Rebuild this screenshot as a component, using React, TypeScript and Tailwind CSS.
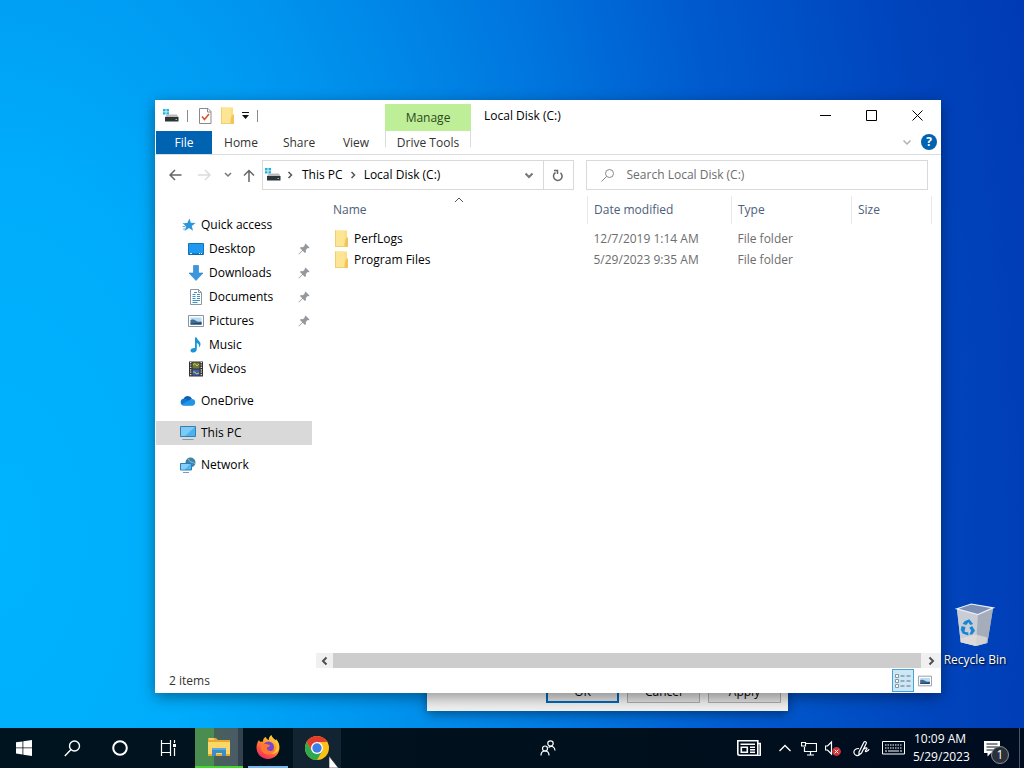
import React, { useState } from 'react';

type IconProps = { className?: string };

const DriveIcon: React.FC<IconProps> = ({ className }) => (
  <svg className={className} width="16" height="16" viewBox="0 0 16 16">
    <path d="M0 1h2.600v2.400H0zM3.400 1H6v2.400H3.400zM0 4.200h2.600v2.400H0zM3.400 4.200H6v2.400H3.400z" fill="#1fb5d8" />
    <path d="M3.500 6.500h10.500l1.500 3H2z" fill="#b9bdc1" />
    <path d="M2 9h13.500v4.500H2z" fill="#2f3438" />
    <path d="M12.500 11h1.500v1h-1.500z" fill="#5fe08a" />
  </svg>
);

const FolderIcon: React.FC<IconProps> = ({ className }) => (
  <svg className={className} width="16" height="18" viewBox="0 0 16 18">
    <path d="M2 .500h12v15.500H2z" fill="#fbdf83" />
    <path d="M2 .500h9.500v15.500H2z" fill="#fce595" />
    <path d="M12.500 9l2.500-2v10h-4z" fill="#f1c55a" />
    <path d="M2 .500h1v15.500H2zM2 16h11v1H2z" fill="#f2cf6c" />
  </svg>
);

const PropertiesIcon = () => (
  <svg width="14" height="16" viewBox="0 0 14 16">
    <path d="M1.500.500h8.500l3 3v12H1.500z" fill="#fff" stroke="#8a8a8a" />
    <path d="M9.500.500v3.500H13" fill="none" stroke="#8a8a8a" />
    <path d="M4 8.500l2.500 3L11 6" fill="none" stroke="#d9532c" strokeWidth="1.600" />
  </svg>
);

const Chevron: React.FC<IconProps & { d: string; w?: number }> = ({ className, d, w = 1.5 }) => (
  <svg className={className} width="10" height="10" viewBox="0 0 10 10" fill="none" stroke="currentColor" strokeWidth={w}>
    <path d={d} />
  </svg>
);

const DOWN = 'M1.500 3.500L5 7l3.500-3.500';
const UP = 'M1 7l4-4 4 4';
const RIGHT = 'M3.500 2l3 3-3 3';
const LEFT = 'M6.500 1.500L3 5l3.500 3.500';

const StarIcon = () => (
  <svg width="16" height="16" viewBox="0 0 16 16">
    <path d="M9.500 1.500l1.300 4.200 4.700.3-3.700 3 1.200 4.800L9 11l-4.500 3 1.700-4.600L2.500 6l4.800-.1z" fill="#2b95dd" />
    <path d="M2.500 9.500h3M3 12h2.500M3 6.500h2" stroke="#63b3e8" />
  </svg>
);

const DesktopIcon = () => (
  <svg width="16" height="16" viewBox="0 0 16 16">
    <path d="M.500 2.500h15v11H.500z" fill="#1e9bf0" stroke="#1273b8" />
    <path d="M1 13h14" stroke="#0b5f9e" />
    <path d="M2 12.500h2M11 12.500h1M13 12.500h1" stroke="#d7efff" />
  </svg>
);

const DownloadIcon = () => (
  <svg width="16" height="16" viewBox="0 0 16 16">
    <path d="M5.500.500h5V8H15l-7 7.500L1 8h4.500z" fill="#3a96dd" stroke="#2f80c4" strokeWidth=".6" />
  </svg>
);

const DocumentIcon = () => (
  <svg width="16" height="16" viewBox="0 0 16 16">
    <path d="M2.500.500h8l3 3v12h-11z" fill="#fff" stroke="#8c969c" />
    <path d="M10.500.500v3h3" fill="none" stroke="#8c969c" />
    <path d="M6 3.500h3M4.500 5.500h3M9 5.500h3M4.500 7.500h3M9 7.500h3M4.500 9.500h3M9 9.500h3M4.500 11.500h7.500M4.500 13.500h5" stroke="#3c94c4" />
  </svg>
);

const PictureIcon: React.FC<IconProps> = ({ className }) => (
  <svg className={className} width="16" height="16" viewBox="0 0 16 16">
    <path d="M.500 2.500h15v11H.500z" fill="#fff" stroke="#8a949c" />
    <path d="M2.500 4.500h11v7h-11z" fill="#b5daf2" />
    <path d="M2.500 7c2-1 3.500-.5 5.500.8s3.500 1 5.500.7v3h-11z" fill="#3f6c93" />
    <path d="M2.500 10.500l11-1v2h-11z" fill="#27476b" />
  </svg>
);

const MusicIcon = () => (
  <svg width="16" height="16" viewBox="0 0 16 16">
    <path d="M7 .500h1.800c.4 3 3.700 3.500 3.700 6.500 0 1.500-.6 2.700-1.500 3.500.5-2.600-.6-4-2.200-4.500V12c0 2-1.500 3.500-3.600 3.500-1.500 0-2.700-.8-2.700-2.100 0-1.600 1.800-2.700 4.500-2.500z" fill="#1a96d8" />
  </svg>
);

const VideoIcon = () => (
  <svg width="16" height="16" viewBox="0 0 16 16">
    <path d="M1 .500h14v15H1z" fill="#33312f" />
    <path d="M4.500 1.500h7v6h-7z" fill="#6d7a3c" />
    <path d="M4.500 8.500h7v6h-7z" fill="#3d5fb0" />
    <path d="M5 4l2-1.500L9 5l2-2M5 11h2l1.500 2 2.500-1" stroke="#d9c554" fill="none" />
    <path d="M2.700 1v14M13.300 1v14" stroke="#e8e8e8" strokeWidth="1.300" strokeDasharray="1.200 1.200" />
  </svg>
);

const CloudIcon = () => (
  <svg width="16" height="16" viewBox="0 0 16 16">
    <path d="M3.500 6A4.600 4.600 0 0 1 12 5.800L9 9z" fill="#0f5fb3" />
    <path d="M3.600 5.800c1.700-.3 3 .3 4.200 1.100L13 12.500H3.400A3.400 3.400 0 0 1 3.600 5.800z" fill="#1277cf" />
    <path d="M12 5.900a3.400 3.400 0 0 1 .6 6.700H3.200c-.8 0-1.500-.3-2-.8L9.500 7c.8-.7 1.600-1 2.500-1.100z" fill="#2296e6" />
  </svg>
);

const ComputerIcon = () => (
  <svg width="16" height="16" viewBox="0 0 16 16">
    <path d="M.500 1.500h15v10H.500z" fill="#49b3f0" stroke="#3b7ea6" />
    <path d="M1 2h14L5 11H1z" fill="#7ccbf6" />
    <path d="M2.500 14.500h11" stroke="#7b9bb0" />
  </svg>
);

const NetworkIcon = () => (
  <svg width="16" height="16" viewBox="0 0 16 16">
    <circle cx="10.500" cy="5.500" r="5" fill="#3f82ab" />
    <path d="M8 2c2 1 1 3 3 3s3 2 4 1" stroke="#8cc3c4" fill="none" />
    <path d="M.500 6.500h11v6.500H.500z" fill="#4fb7f1" stroke="#2e7fb5" />
    <path d="M1 7h9l-5 5.500H1z" fill="#83cff7" />
    <path d="M3 15.500h6" stroke="#6c9fc0" />
  </svg>
);

const PinIcon = () => (
  <svg width="12" height="12" viewBox="0 0 12 12">
    <path d="M7.500.500l4 4-1 .8-.8-.2-1.900 2 .2 2-1 1L4.600 7.700 1 11.500l-.5-.5 3.700-3.700L1.900 5l1-1 2 .2 2-1.900-.2-.8z" fill="#93999e" />
  </svg>
);

const quickAccess = [
  { label: 'Desktop', icon: <DesktopIcon />, pinned: true },
  { label: 'Downloads', icon: <DownloadIcon />, pinned: true },
  { label: 'Documents', icon: <DocumentIcon />, pinned: true },
  { label: 'Pictures', icon: <PictureIcon />, pinned: true },
  { label: 'Music', icon: <MusicIcon />, pinned: false },
  { label: 'Videos', icon: <VideoIcon />, pinned: false },
];

const places = [
  { label: 'OneDrive', icon: <CloudIcon /> },
  { label: 'This PC', icon: <ComputerIcon /> },
  { label: 'Network', icon: <NetworkIcon /> },
];

const files = [
  { name: 'PerfLogs', modified: '12/7/2019 1:14 AM', type: 'File folder', size: '' },
  { name: 'Program Files', modified: '5/29/2023 9:35 AM', type: 'File folder', size: '' },
];

const RibbonHeader = () => (
  <header className="flex h-[55px] shrink-0 border-b border-[#dadbdc]">
    <div className="flex w-[230px] flex-col">
      <div className="flex h-[31px] items-center pl-2">
        <DriveIcon />
        <span className="ml-2 h-3 w-px bg-[#8a8a8a]" />
        <button aria-label="Properties" className="ml-2.5"><PropertiesIcon /></button>
        <button aria-label="New folder" className="ml-[7px]"><FolderIcon /></button>
        <button aria-label="Customize Quick Access Toolbar" className="ml-1.5">
          <svg width="9" height="9" viewBox="0 0 9 9">
            <path d="M1 1.500h7" stroke="#111" />
            <path d="M1 4h7L4.500 8z" fill="#111" />
          </svg>
        </button>
        <span className="ml-[7px] h-3 w-px bg-[#8a8a8a]" />
      </div>
      <nav className="flex h-[23px] text-[#333]">
        <button className="ml-px w-14 bg-[#0063b1] text-white">File</button>
        <button className="w-[58px]">Home</button>
        <button className="w-[58px]">Share</button>
        <button className="w-14">View</button>
      </nav>
    </div>
    <div className="flex w-[86px] flex-col pt-1 text-[#333]">
      <div className="flex h-[27px] items-center justify-center bg-[#beee98] text-[#2c4a1c]">Manage</div>
      <button className="h-4 border-x border-[#dadbdc] pt-1 leading-4">Drive Tools</button>
    </div>
    <div className="flex min-w-0 flex-1 flex-col">
      <div className="flex h-[31px] items-center pr-px">
        <h1 className="flex-1 pl-[13px] text-black">Local Disk (C:)</h1>
        <button aria-label="Minimize" className="flex h-full w-[46px] items-center justify-center">
          <svg width="11" height="11" viewBox="0 0 11 11" stroke="#000"><path d="M0 5.500h11" /></svg>
        </button>
        <button aria-label="Maximize" className="flex h-full w-[46px] items-center justify-center">
          <svg width="11" height="11" viewBox="0 0 11 11" stroke="#000" fill="none"><path d="M.500.500h10v10H.500z" /></svg>
        </button>
        <button aria-label="Close" className="flex h-full w-[46px] items-center justify-center">
          <svg width="11" height="11" viewBox="0 0 11 11" stroke="#000"><path d="M.500.500l10 10M10.500.500l-10 10" /></svg>
        </button>
      </div>
      <div className="flex h-[22px] items-center justify-end gap-[9px] pr-1">
        <button aria-label="Expand the Ribbon"><Chevron d={DOWN} className="text-[#b0b0b0]" /></button>
        <button aria-label="Help" className="flex h-4 w-4 items-center justify-center rounded-full bg-[#0063b1] font-bold text-white">?</button>
      </div>
    </div>
  </header>
);

const NavigationBar = () => (
  <div className="flex h-[38px] shrink-0 items-center pt-0.5 pr-[13px] pl-3.5">
    <button aria-label="Back">
      <svg width="13" height="12" viewBox="0 0 13 12" fill="none" stroke="#666" strokeWidth="1.500"><path d="M12.500 6H1M6 1L1 6l5 5" /></svg>
    </button>
    <button aria-label="Forward" className="ml-4">
      <svg width="13" height="12" viewBox="0 0 13 12" fill="none" stroke="#dcdcdc" strokeWidth="1.500"><path d="M0 6h11.500M7 1l5 5-5 5" /></svg>
    </button>
    <button aria-label="Recent locations" className="ml-3">
      <Chevron d="M2 3l3 3 3-3" className="text-[#777]" />
    </button>
    <button aria-label="Up" className="ml-2.5">
      <svg width="12" height="13" viewBox="0 0 12 13" fill="none" stroke="#666" strokeWidth="1.500"><path d="M6 13V1.500M1 6.500l5-5 5 5" /></svg>
    </button>
    <div className="ml-[7px] flex h-[30px] min-w-0 flex-[10] items-center border border-[#d9d9d9]">
      <DriveIcon className="ml-0.5" />
      <Chevron d={RIGHT} className="ml-1 text-[#555]" />
      <button className="ml-[7px]">This PC</button>
      <Chevron d={RIGHT} className="ml-[5px] text-[#555]" />
      <button className="ml-1.5">Local Disk (C:)</button>
      <button aria-label="Previous locations" className="mr-[9px] ml-auto"><Chevron d={DOWN} w={2} className="text-[#777]" /></button>
      <button aria-label="Refresh" className="flex h-full w-[30px] items-center justify-center border-l border-[#d9d9d9]">
        <svg width="12" height="13" viewBox="0 0 12 13" fill="none" stroke="#666" strokeWidth="1.500">
          <path d="M8.500 3.800A4.300 4.300 0 1 1 3.500 3.500" />
          <path d="M2 1.500h3.500V5" />
        </svg>
      </button>
    </div>
    <label className="ml-3 flex h-[30px] min-w-0 flex-[11] items-center border border-[#d9d9d9]">
      <svg className="ml-3.5" width="14" height="14" viewBox="0 0 14 14" fill="none" stroke="#888"><circle cx="8.500" cy="5.500" r="4" /><path d="M5.500 8.500L.500 13.500" /></svg>
      <input
        type="text"
        aria-label="Search Local Disk (C:)"
        placeholder="Search Local Disk (C:)"
        className="ml-3 min-w-0 flex-1 outline-none placeholder:text-[#6d6d6d]"
      />
    </label>
  </div>
);

const Sidebar: React.FC<{ selected: string; onSelect: (label: string) => void }> = ({ selected, onSelect }) => (
  <nav className="flex w-[158px] shrink-0 flex-col px-px pt-5">
    <button className="flex h-6 items-center gap-[5px] pl-6">
      <StarIcon />
      Quick access
    </button>
    {quickAccess.map((item) => (
      <button key={item.label} className="flex h-6 items-center gap-[5px] pr-0.5 pl-8">
        {item.icon}
        <span className="flex-1 text-left">{item.label}</span>
        {item.pinned && <PinIcon />}
      </button>
    ))}
    {places.map((item) => (
      <button
        key={item.label}
        onClick={() => onSelect(item.label)}
        className={`mt-2 flex h-6 items-center gap-[5px] pl-6 ${selected === item.label ? 'bg-[#d9d9d9]' : ''}`}
      >
        {item.icon}
        {item.label}
      </button>
    ))}
  </nav>
);

const FileList = () => (
  <div className="flex min-w-0 flex-1 flex-col">
    <div className="flex-1 pt-[3px] pr-[9px] pl-2">
      <table className="w-full table-fixed border-collapse text-left">
        <colgroup>
          <col />
          <col className="w-36" />
          <col className="w-[120px]" />
          <col className="w-20" />
        </colgroup>
        <thead className="text-[#4c607a]">
          <tr className="h-7">
            <th className="relative border-r border-[#e8e8e8] pl-3 font-normal">
              Name
              <Chevron d={UP} w={1} className="absolute -top-px left-1/2 text-[#555]" />
            </th>
            <th className="border-r border-[#e8e8e8] pl-1.5 font-normal">Date modified</th>
            <th className="border-r border-[#e8e8e8] pl-1.5 font-normal">Type</th>
            <th className="border-r border-[#e8e8e8] pl-1.5 font-normal">Size</th>
          </tr>
        </thead>
        <tbody className="text-[#6d6d6d]">
          <tr className="h-1"><td colSpan={4} /></tr>
          {files.map((file) => (
            <tr key={file.name} className="h-[21px]">
              <td className="p-0 pl-3">
                <span className="flex items-center gap-[5px] text-black">
                  <FolderIcon />
                  {file.name}
                </span>
              </td>
              <td className="p-0 pl-1.5">{file.modified}</td>
              <td className="p-0 pl-1.5">{file.type}</td>
              <td className="p-0 pl-1.5">{file.size}</td>
            </tr>
          ))}
        </tbody>
      </table>
    </div>
    <div className="ml-[3px] flex h-[15px] items-center bg-[#f0f0f0]">
      <button aria-label="Scroll left" className="flex w-[17px] justify-center"><Chevron d={LEFT} w={2} className="text-[#505050]" /></button>
      <div className="h-full flex-1 bg-[#cdcdcd]" />
      <button aria-label="Scroll right" className="flex w-5 justify-center"><Chevron d="M3.500 1.500L7 5 3.500 8.500" w={2} className="text-[#505050]" /></button>
    </div>
  </div>
);

const ExplorerWindow = () => {
  const [selected, setSelected] = useState('This PC');

  return (
    <section className="absolute top-[100px] right-[83px] bottom-[35px] left-[155px] flex flex-col bg-white shadow-[0_4px_14px_rgba(0,0,0,0.4)]">
      <RibbonHeader />
      <NavigationBar />
      <div className="flex min-h-0 flex-1">
        <Sidebar selected={selected} onSelect={setSelected} />
        <FileList />
      </div>
      <footer className="flex h-[25px] shrink-0 items-center justify-between pr-[9px] pl-3.5 text-[#333]">
        2 items
        <div className="flex items-center gap-1">
          <button aria-label="Details view" className="flex h-[23px] w-[22px] items-center justify-center border border-[#4ba3d3] bg-[#cce8f6]">
            <svg width="16" height="14" viewBox="0 0 16 14" fill="none">
              <path d="M.500.500h3v3h-3zM.500 5.500h3v3h-3zM.500 10.500h3v3h-3z" fill="#fff" stroke="#8496a3" />
              <path d="M5.500 2h4M11.500 2h4M5.500 7h4M11.500 7h4M5.500 12h4M11.500 12h4" stroke="#60717e" />
            </svg>
          </button>
          <button aria-label="Large icons view"><PictureIcon className="h-3.5 w-3.5" /></button>
        </div>
      </footer>
    </section>
  );
};

const PropertiesDialog = () => (
  <section className="absolute bottom-[17px] left-[427px] flex h-[300px] w-[361px] items-end justify-end gap-2 bg-[#f0f0f0] px-[7px] pb-2 shadow-[0_3px_10px_rgba(0,0,0,0.4)]">
    <button className="h-[23px] w-[73px] border-2 border-[#0067b8] bg-[#e1e1e1]">OK</button>
    <button className="h-[23px] w-[73px] border border-[#adadad] bg-[#e1e1e1]">Cancel</button>
    <button className="h-[23px] w-[73px] border border-[#adadad] bg-[#e1e1e1]">Apply</button>
  </section>
);

const RecycleBin = () => (
  <button className="absolute right-3 bottom-[60px] flex w-[74px] flex-col items-center text-white">
    <svg width="40" height="44" viewBox="0 0 42 46">
      <path d="M2 6l15-5 23 4-6 37-12 3-16-4z" fill="#c6cad2" fillOpacity=".9" />
      <path d="M24 12l16-7-6 37-12 3z" fill="#a5adba" />
      <path d="M2 6l22 6-2 33-16-4z" fill="#c9cdd6" />
      <path d="M6 37l16-4 12 3-1 6-11 3-16-4z" fill="#e8dfdb" fillOpacity=".7" />
      <path d="M2 6l15-5 23 4-16 7z" fill="#7c8fb5" stroke="#e9edf4" strokeWidth="1.200" />
      <path d="M10 19l5-2 4 5-3 1-2-3-2 3-4-1zM18 24l3 5-3 4h-3l2-4-2-3zM7 24l4 1-1 5 4 1v3l-6-2-2-4z" fill="#1786d8" />
    </svg>
    <span className="mt-[5px] leading-4 whitespace-nowrap [text-shadow:1px_1px_2px_#000]">Recycle Bin</span>
  </button>
);

const FirefoxIcon = () => (
  <svg width="24" height="24" viewBox="0 0 24 24">
    <defs>
      <linearGradient id="fox" x1="0.8" y1="0" x2="0.2" y2="1">
        <stop offset="0" stopColor="#ffe14a" />
        <stop offset=".4" stopColor="#ff9a28" />
        <stop offset=".75" stopColor="#ff4a47" />
        <stop offset="1" stopColor="#e5246e" />
      </linearGradient>
    </defs>
    <path d="M3 5c.3 1 .8 1.500 1.300 1.800L7 6.500C7 4 8 2.500 10 2c0 1.500 1.500 2.500 3 3C12.500 3 13.500 1 15.500 0c.5 3 2.500 4 4 6l.5-2c2.500 2.500 3.500 5.500 3.500 8.500C23.500 19 18.500 24 12 24S.500 19 .500 12.500C.500 9.500 1.500 7 3 5z" fill="url(#fox)" />
    <circle cx="12.500" cy="12" r="5.500" fill="#7a45cf" />
    <path d="M5 10c2-2 5-1.500 7-.5l2 .5c0 1.500-1.500 2-3 2.500-.5 2 1 3.500 3.500 3.500 2 0 3-1.500 4.500-1-1 3-4 4.500-7 4.500-4 0-7.500-3.500-7-9.500z" fill="#ff7a2e" />
    <path d="M15.500 1c.5 3 5.500 5 5 11-.5 4-3 6.500-6 7 6 .5 9-4 8.500-8.500C22.500 6 18 5 15.500 1z" fill="#ffc63a" />
  </svg>
);

const ChromeIcon = () => (
  <svg width="24" height="24" viewBox="0 0 24 24">
    <circle cx="12" cy="12" r="12" fill="#fbc116" />
    <path d="M12 6h10.390A12 12 0 0 0 1.610 6L7 15z" fill="#e33b2e" />
    <path d="M1.610 6A12 12 0 0 0 12 24l5.200-9-5.200 3-5.200-3z" fill="#2da94f" />
    <circle cx="12" cy="12" r="6" fill="#fff" />
    <circle cx="12" cy="12" r="4.700" fill="#3f7ee8" />
  </svg>
);

const Taskbar = () => (
  <footer className="relative flex h-10 shrink-0 items-stretch bg-[linear-gradient(90deg,#00141f,#00101c_60%,#000c20)] text-white">
    <button aria-label="Start" className="flex w-12 items-center justify-center">
      <svg width="16" height="16" viewBox="0 0 16 16" fill="#fff"><path d="M0 2.300l6.500-.9v6.100H0zM7.300 1.300L16 0v7.500H7.300zM0 8.300h6.500v6.200L0 13.600zM7.300 8.300H16V16l-8.700-1.300z" /></svg>
    </button>
    <button aria-label="Search" className="flex w-12 items-center justify-center">
      <svg width="17" height="17" viewBox="0 0 17 17" fill="none" stroke="#fff" strokeWidth="1.400"><circle cx="10.500" cy="6" r="5" /><path d="M7 9.500L.800 16" /></svg>
    </button>
    <button aria-label="Cortana" className="flex w-12 items-center justify-center">
      <svg width="16" height="16" viewBox="0 0 16 16" fill="none" stroke="#fff" strokeWidth="2"><circle cx="8" cy="8" r="6.800" /></svg>
    </button>
    <button aria-label="Task View" className="flex w-12 items-center justify-center">
      <svg width="17" height="16" viewBox="0 0 17 16" fill="none" stroke="#fff" strokeWidth="1.200">
        <path d="M1.500 0v3.500h9V0M1.500 16v-3.500h9V16M1.500 3.500v9M10.500 3.500v9M14.500 0v3M14.500 8v8" />
        <path d="M13 4h3v3h-3z" fill="#fff" stroke="none" />
      </svg>
    </button>
    <button aria-label="File Explorer" className="ml-[3px] flex w-12 items-center justify-center border-b-2 border-[#43d62c] bg-[linear-gradient(90deg,#4b8c50_40%,#45625a_40%,#4b5a66_90%,#33424c_90%)]">
      <svg width="22" height="20" viewBox="0 0 22 20">
        <path d="M0 1h8l2 2h12v16H0z" fill="#e9a92f" />
        <path d="M0 5h22v12H0z" fill="#fcd667" />
        <path d="M4 19v-8h14v8h-4v-3H8v3z" fill="#3b8ccb" />
        <path d="M4 11h14v2H4z" fill="#5aa9de" />
        <path d="M1 2h5" stroke="#fff1b8" />
      </svg>
    </button>
    <button aria-label="Firefox" className="ml-px flex w-12 flex-col items-center">
      <span className="flex flex-1 items-center"><FirefoxIcon /></span>
      <span className="h-0.5 w-10 bg-[#76b9ed]" />
    </button>
    <button aria-label="Google Chrome" className="ml-px flex w-12 items-center justify-center bg-[#122431]"><ChromeIcon /></button>
    <div className="flex flex-1 items-center justify-center pl-[18px]">
      <button aria-label="People">
        <svg width="16" height="16" viewBox="0 0 16 16" fill="none" stroke="#fff" strokeWidth="1.200">
          <circle cx="10.500" cy="3.500" r="2.700" />
          <circle cx="5" cy="8.500" r="2.500" />
          <path d="M1 15.500c0-6 8-6 8 0M8.500 7.500c3-2.500 6.500-.5 6.500 3" />
        </svg>
      </button>
    </div>
    <div className="flex items-center">
      <button aria-label="News" className="mr-[18px]">
        <svg width="24" height="16" viewBox="0 0 24 16" fill="none" stroke="#fff" strokeWidth="1.600">
          <path d="M.800.800h20v14.400H2.500A1.700 1.700 0 0 1 .800 13.500zM20.800 3.500h2.400v10a1.700 1.700 0 0 1-3.200 1.500" />
          <path d="M3.500 4.300h14.500M13 7.300h5M13 9.800h5M13 12.300h5M4.300 7.300h6v5h-6z" />
        </svg>
      </button>
      <button aria-label="Show hidden icons" className="mr-2.5">
        <svg width="12" height="8" viewBox="0 0 12 8" fill="none" stroke="#fff" strokeWidth="1.300"><path d="M.500 7L6 1.500 11.500 7" /></svg>
      </button>
      <button aria-label="Network" className="mr-2">
        <svg width="16" height="15" viewBox="0 0 16 15" fill="none" stroke="#fff" strokeWidth="1.200">
          <path d="M5 2.500h10.500v8H3.500V6M9.500 10.500v3M6 14h7M.500 1.500h4V5h-4z" />
        </svg>
      </button>
      <button aria-label="Speakers" className="mr-3">
        <svg width="16" height="16" viewBox="0 0 16 16" fill="none">
          <path d="M.500 6h2l4-4v12l-4-4h-2z" stroke="#fff" strokeWidth="1.200" />
          <circle cx="11.500" cy="11.500" r="4.400" fill="#d13438" />
          <path d="M9.700 9.700l3.600 3.600M13.300 9.700l-3.600 3.600" stroke="#fff" />
        </svg>
      </button>
      <button aria-label="Windows Ink Workspace" className="mr-3">
        <svg width="17" height="17" viewBox="0 0 17 17" fill="none" stroke="#fff" strokeWidth="1.200">
          <path d="M6 12l5-10c.8-1 2.800 0 2.300 1.200L8.500 13l-2.500 2zM6 8.500C2 8.500.500 10.500 1 13s4 3.500 5 1.500M11 9c2-2 4-1 2.500.5S12 12 13.500 11.500 16 10 16 9" />
        </svg>
      </button>
      <button aria-label="Touch keyboard" className="mr-2">
        <svg width="23" height="14" viewBox="0 0 23 14" fill="none" stroke="#fff">
          <path d="M.500.500h22v12.500H.500z" />
          <path d="M3 4h17M3 7h17" strokeDasharray="1.500 1" />
          <path d="M3 10h2M6 10h11M18 10h2" />
        </svg>
      </button>
      <button className="w-[54px] text-center leading-[18px] whitespace-nowrap">
        10:09 AM
        <br />
        5/29/2023
      </button>
      <button aria-label="Notifications" className="relative ml-4 h-5 w-6">
        <svg width="18" height="17" viewBox="0 0 18 17"><path d="M1 1h16v12H8l-3.500 3.500V13H1z" fill="#fff" /><path d="M3.500 4h11M3.500 7h11M3.500 10h8" stroke="#0a1420" strokeWidth="1.200" /></svg>
        <span className="absolute top-2 left-2 flex h-[18px] w-[18px] items-center justify-center rounded-full border border-[#8a8f96] bg-[#2b3138]">1</span>
      </button>
      <span className="ml-3 h-10 w-px bg-[#4a5564]" />
      <span className="w-1" />
    </div>
    <svg className="absolute top-7 left-[328px]" width="12" height="12" viewBox="0 0 12 12">
      <path d="M1 0v12h9.500z" fill="#fff" stroke="#222" strokeWidth=".6" />
    </svg>
  </footer>
);

const App: React.FC = () => {
  return (
    <div className="flex h-screen flex-col overflow-hidden bg-[radial-gradient(ellipse_105%_250%_at_0%_70%,#00b4ff_0%,#00acfb_19%,#00a0f5_28%,#0094ee_37%,#0076de_55%,#005ace_70%,#0044bc_88%,#003ab4_100%)] font-['Open_Sans','Noto_Sans',sans-serif] text-xs text-black">
      <main className="relative min-h-0 flex-1">
        <PropertiesDialog />
        <RecycleBin />
        <ExplorerWindow />
      </main>
      <Taskbar />
    </div>
  );
};

export default App;
